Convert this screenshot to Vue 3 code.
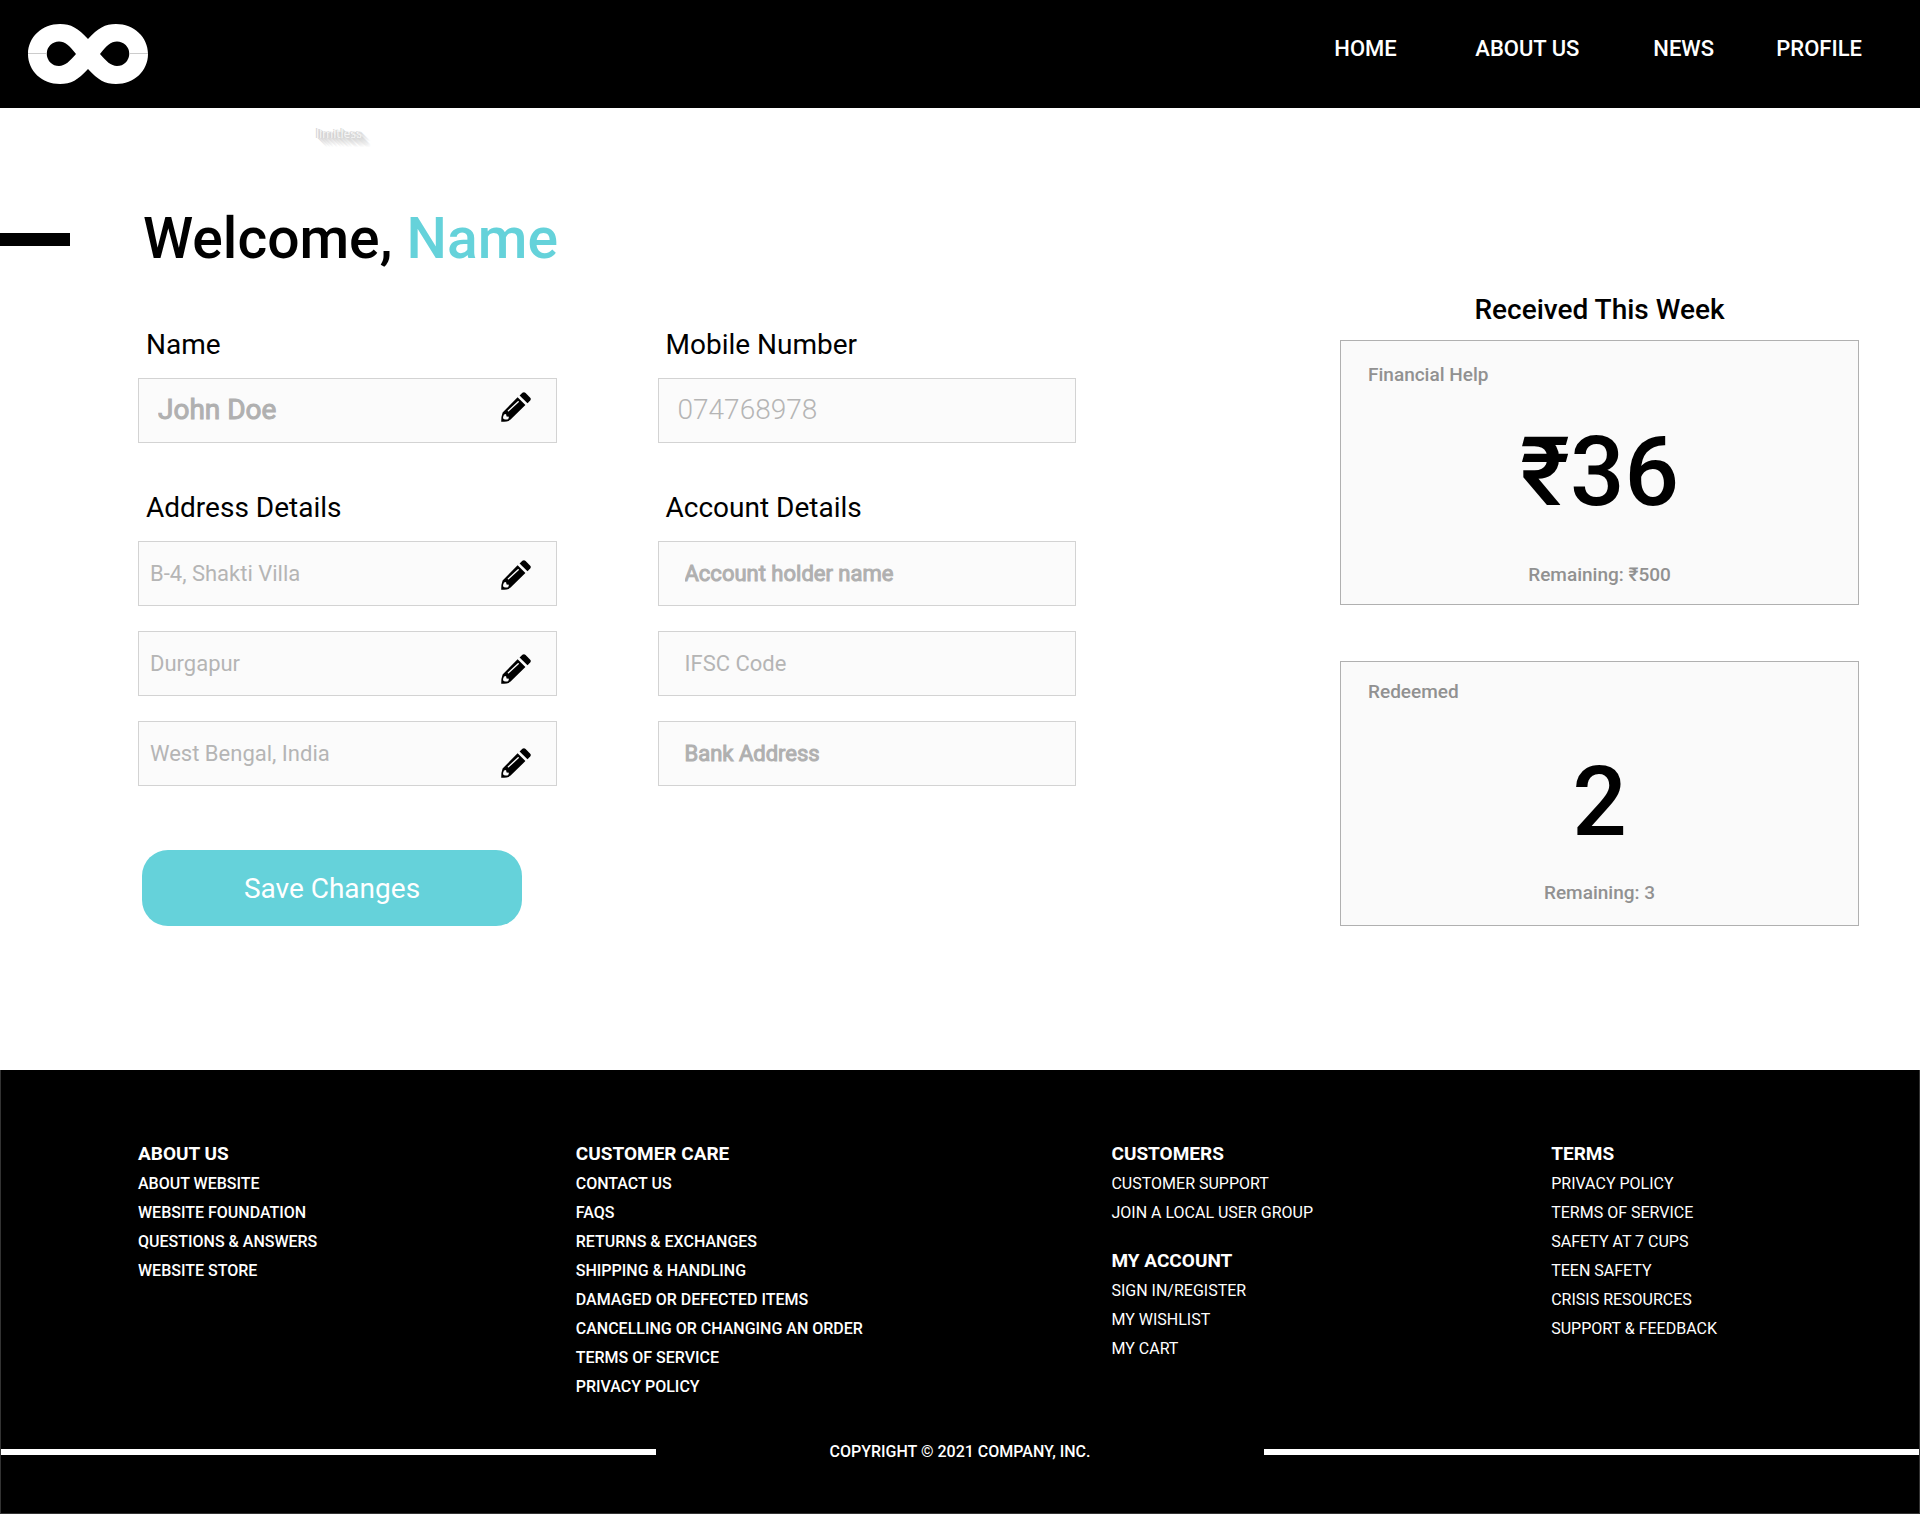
<script setup>
import { reactive } from 'vue'

const navLinks = ['HOME', 'ABOUT US', 'NEWS', 'PROFILE']

const profile = reactive({
  name: 'John Doe',
  mobile: '074768978',
  address: ['B-4, Shakti Villa', 'Durgapur', 'West Bengal, India'],
  holder: '',
  ifsc: '',
  bank: ''
})

const addressLabels = ['Street', 'City', 'State and country']

const cards = [
  { id: 'help', title: 'Financial Help', value: '₹36', note: 'Remaining: ₹500' },
  { id: 'redeemed', title: 'Redeemed', value: '2', note: 'Remaining: 3' }
]

const footerColumns = [
  {
    strong: true,
    groups: [
      { title: 'ABOUT US', links: ['ABOUT WEBSITE', 'WEBSITE FOUNDATION', 'QUESTIONS & ANSWERS', 'WEBSITE STORE'] }
    ]
  },
  {
    strong: true,
    groups: [
      {
        title: 'CUSTOMER CARE',
        links: [
          'CONTACT US',
          'FAQS',
          'RETURNS & EXCHANGES',
          'SHIPPING & HANDLING',
          'DAMAGED OR DEFECTED ITEMS',
          'CANCELLING OR CHANGING AN ORDER',
          'TERMS OF SERVICE',
          'PRIVACY POLICY'
        ]
      }
    ]
  },
  {
    strong: false,
    groups: [
      { title: 'CUSTOMERS', links: ['CUSTOMER SUPPORT', 'JOIN A LOCAL USER GROUP'] },
      { title: 'MY ACCOUNT', links: ['SIGN IN/REGISTER', 'MY WISHLIST', 'MY CART'] }
    ]
  },
  {
    strong: false,
    groups: [
      {
        title: 'TERMS',
        links: ['PRIVACY POLICY', 'TERMS OF SERVICE', 'SAFETY AT 7 CUPS', 'TEEN SAFETY', 'CRISIS RESOURCES', 'SUPPORT & FEEDBACK']
      }
    ]
  }
]
</script>

<template>
  <div class="page">
    <svg width="0" height="0" class="sprite" aria-hidden="true">
      <symbol id="pencil" viewBox="0 0 30 30">
        <path d="M18.6 3.4 21.4.8Q23-.4 24.6 1L29 5.4Q30.5 7 29.2 8.6L26.5 11.2Z" />
        <path d="M16.6 5.3 24.4 13.1 9.6 27.6Q7.6 29.8.2 29.8.2 24 1.6 20.6Z" />
        <path d="M3 22.4Q1.8 24.6 2.2 26.4 3.2 28.2 7.2 27.2L8 24.8 5.6 24.4 5 22Z" fill="#fbfbfb" />
        <path d="M7.4 18.8 17.2 9.8" stroke="#fbfbfb" stroke-width="1.4" stroke-linecap="round" />
      </symbol>
    </svg>

    <header class="topbar">
      <a href="#" class="logo" aria-label="Limitless home">
        <svg width="120" height="60" viewBox="0 0 120 60">
          <path
            fill="#fff"
            fill-rule="evenodd"
            d="M60 15C50 4 43 0 32 0 14 0 0 13 0 30S14 60 32 60C43 60 50 56 60 45 70 56 77 60 88 60 106 60 120 47 120 30S106 0 88 0C77 0 70 4 60 15ZM48 30C42 37 37 42 31 42A12 12 0 0 1 31 17.500C37 17.500 42 22 48 30ZM72 30C78 22 83 17.500 89 17.500A12 12 0 0 1 89 42C83 42 78 37 72 30Z"
          />
          <path d="M0 29.500H19M101 29.500H120" stroke="#ccc" />
        </svg>
      </a>
      <nav class="nav">
        <a v-for="link in navLinks" :key="link" href="#">{{ link }}</a>
      </nav>
    </header>

    <p class="wordmark">limitless</p>

    <div class="welcome">
      <span class="dash"></span>
      <h1>Welcome, <span class="accent">Name</span></h1>
    </div>

    <main class="content">
      <form class="form" @submit.prevent>
        <div class="group">
          <label for="name">Name</label>
          <div class="fields">
            <input id="name" v-model="profile.name" class="field large heavy" type="text" />
            <div class="edits single">
              <button type="button" class="edit" aria-label="Edit name">
                <svg width="30" height="30"><use href="#pencil" /></svg>
              </button>
            </div>
          </div>
        </div>
        <div class="group">
          <label for="mobile">Mobile Number</label>
          <div class="fields">
            <input id="mobile" v-model="profile.mobile" class="field large thin" type="tel" />
          </div>
        </div>
        <div class="group">
          <label for="address-0">Address Details</label>
          <div class="fields">
            <input
              v-for="(line, i) in profile.address"
              :id="`address-${i}`"
              :key="i"
              v-model="profile.address[i]"
              class="field"
              type="text"
              :aria-label="addressLabels[i]"
            />
            <div class="edits">
              <button v-for="label in addressLabels" :key="label" type="button" class="edit" :aria-label="`Edit ${label}`">
                <svg width="30" height="30"><use href="#pencil" /></svg>
              </button>
            </div>
          </div>
        </div>
        <div class="group">
          <label for="holder">Account Details</label>
          <div class="fields">
            <input id="holder" v-model="profile.holder" class="field account heavy" type="text" placeholder="Account holder name" />
            <input v-model="profile.ifsc" class="field account" type="text" placeholder="IFSC Code" aria-label="IFSC Code" />
            <input v-model="profile.bank" class="field account heavy" type="text" placeholder="Bank Address" aria-label="Bank Address" />
          </div>
        </div>
        <button type="submit" class="save">Save Changes</button>
      </form>

      <section class="summary">
        <h2>Received This Week</h2>
        <article v-for="card in cards" :key="card.id" class="card" :class="card.id">
          <h3>{{ card.title }}</h3>
          <p class="value">{{ card.value }}</p>
          <p class="note">{{ card.note }}</p>
        </article>
      </section>
    </main>

    <footer class="footer">
      <div class="columns">
        <div v-for="(column, i) in footerColumns" :key="i" class="column" :class="{ strong: column.strong }">
          <div v-for="group in column.groups" :key="group.title">
            <h4>{{ group.title }}</h4>
            <ul>
              <li v-for="link in group.links" :key="link"><a href="#">{{ link }}</a></li>
            </ul>
          </div>
        </div>
      </div>
      <div class="copyright">
        <span class="rule"></span>
        <p>COPYRIGHT © 2021 COMPANY, INC.</p>
        <span class="rule"></span>
      </div>
    </footer>
  </div>
</template>

<style>
body {
  background: #fff;
}
</style>

<style scoped>
.page {
  font-family: Roboto, "Liberation Sans", sans-serif;
  color: #000;
}

.page * {
  box-sizing: border-box;
}

h1,
h2,
h3,
h4,
p,
ul {
  margin: 0;
  padding: 0;
}

a {
  color: inherit;
  text-decoration: none;
}

input,
button {
  font-family: inherit;
}

.sprite {
  position: absolute;
}

.topbar {
  display: flex;
  justify-content: space-between;
  align-items: flex-start;
  height: 108px;
  padding: 24px 58px 0 28px;
  background: #000;
  color: #fff;
}

.logo svg {
  display: block;
}

.nav {
  display: grid;
  grid-template-columns: 141px 178px 123px auto;
  padding-top: 13px;
  font-size: 22px;
  font-weight: 500;
  line-height: 24px;
}

.wordmark {
  padding: 14px 0 0 316px;
  color: #f4f4f4;
  font-family: "Open Sans", sans-serif;
  font-size: 12px;
  font-weight: 400;
  line-height: 24px;
  text-shadow:
    -1px 0 #cfcfcf,
    1px 1px #d8d8d8,
    2px 2px #dadada,
    3px 3px #dedede,
    4px 4px #e2e2e2,
    5px 5px #e6e6e6,
    6px 6px #eaeaea,
    7px 7px #eeeeee,
    8px 8px #f4f4f4,
    9px 9px #fafafa;
}

.welcome {
  display: flex;
  align-items: center;
  gap: 73px;
  margin-top: 63px;
}

.dash {
  width: 70px;
  height: 13px;
  background: #000;
}

h1 {
  font-size: 57px;
  font-weight: 500;
  line-height: 60px;
}

.accent {
  color: #65d2da;
}

.content {
  display: grid;
  grid-template-columns: 938fr 519fr;
  column-gap: 264px;
  align-items: start;
  padding: 25px 61px 144px 138px;
}

.form {
  display: grid;
  grid-template-columns: 1fr 1fr;
  gap: 49px 101px;
  padding-top: 35px;
}

.group label {
  display: block;
  padding-left: 8px;
  margin-bottom: 17px;
  font-size: 28px;
  line-height: 32px;
}

.fields {
  position: relative;
  display: flex;
  flex-direction: column;
  gap: 25px;
}

.field {
  width: 100%;
  height: 65px;
  padding: 0 60px 1px 11px;
  border: 1px solid #d3d3d3;
  border-radius: 0;
  background: #fbfbfb;
  color: #b5b5b5;
  font-size: 22px;
  outline: none;
}

.field::placeholder {
  color: inherit;
  opacity: 1;
}

.field.account {
  padding-left: 26px;
}

.field.large {
  padding: 0 60px 2px 19px;
  font-size: 28px;
}

.field.heavy {
  color: #b0b0b0;
  -webkit-text-stroke: 1px #b0b0b0;
}

.field.thin {
  font-weight: 300;
}

/* Edit buttons sit on top of the inputs' right edge */
.edits {
  position: absolute;
  top: 19px;
  right: 26px;
  display: flex;
  flex-direction: column;
  gap: 64px;
}

.edits.single {
  top: 14px;
}

.edit {
  width: 30px;
  height: 30px;
  padding: 0;
  border: 0;
  background: none;
  color: #000;
}

.edit svg {
  display: block;
}

.save {
  width: 380px;
  height: 76px;
  margin: 15px 0 0 4px;
  border: 0;
  border-radius: 26px;
  background: #65d2da;
  color: #fff;
  font-size: 28px;
}

h2 {
  margin-bottom: 14px;
  font-size: 28px;
  font-weight: 500;
  line-height: 32px;
  text-align: center;
}

.card {
  height: 265px;
  padding: 22px 27px 0;
  border: 1px solid #b0b0b0;
  background: #fafafa;
  text-align: center;
}

.card + .card {
  margin-top: 56px;
}

h3,
.note {
  color: #919191;
  font-size: 19px;
  font-weight: 500;
  line-height: 24px;
}

h3 {
  text-align: left;
}

.value {
  margin: 35px 0 41px;
  font-size: 96px;
  font-weight: 500;
  line-height: 100px;
}

.card.redeemed {
  padding-top: 18px;
}

.redeemed .value {
  margin: 48px 0 29px;
}

.footer {
  padding: 69px 0 47px;
  border: 1px solid #333;
  border-top: 0;
  background: #000;
  color: #fff;
}

.columns {
  display: grid;
  grid-template-columns: 438fr 536fr 440fr 368fr;
  padding-left: 137px;
}

.column {
  display: flex;
  flex-direction: column;
  gap: 19px;
  font-size: 16px;
  line-height: 29px;
}

.column.strong {
  font-weight: 500;
}

.column ul {
  list-style: none;
}

h4 {
  font-size: 19px;
  font-weight: 700;
  line-height: 30px;
}

.copyright {
  display: grid;
  grid-template-columns: 656fr 608fr 656fr;
  align-items: center;
  margin-top: 36px;
  font-size: 16px;
  font-weight: 500;
  line-height: 29px;
  text-align: center;
}

.rule {
  height: 6px;
  background: #fff;
}
</style>
